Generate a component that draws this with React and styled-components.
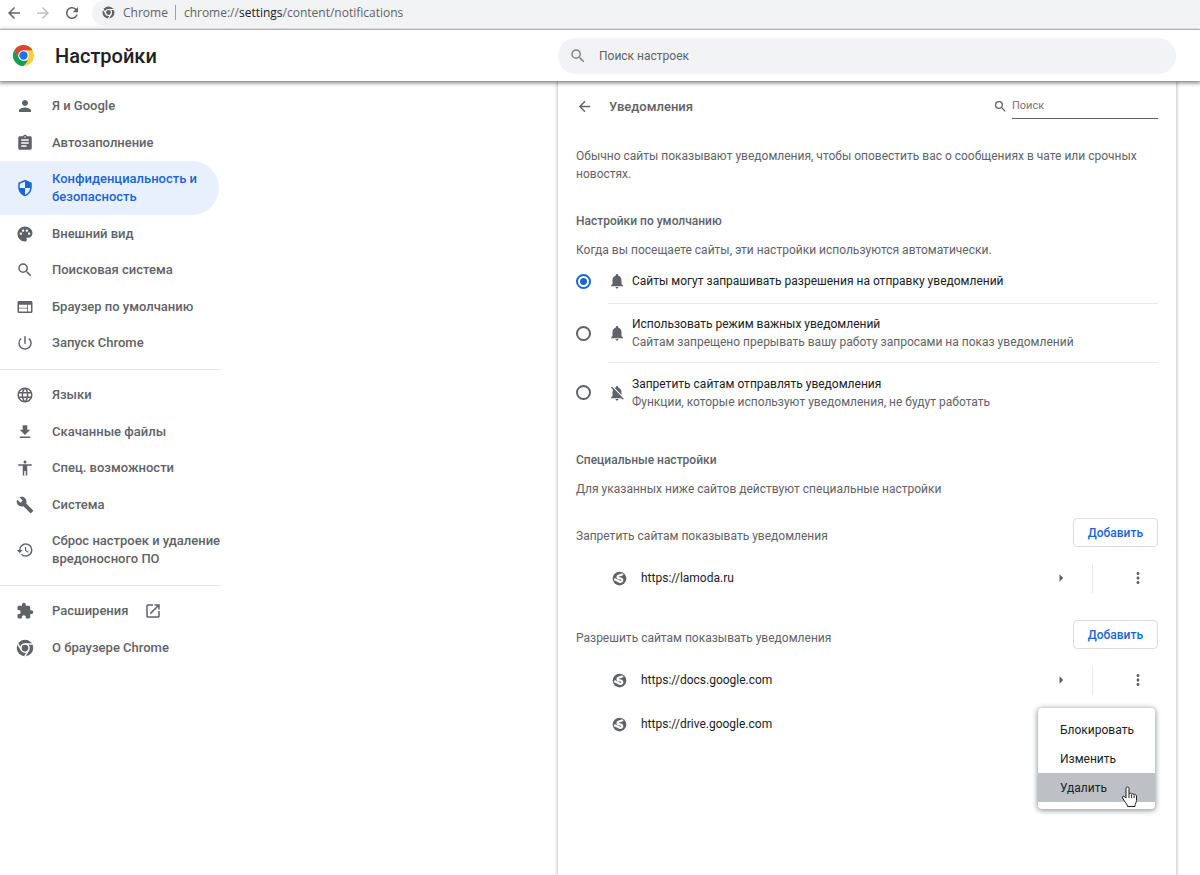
import { useState } from 'react';

import styled, { createGlobalStyle, css } from 'styled-components';
import {
  MdAccessibility,
  MdArrowBack,
  MdArrowForward,
  MdArrowRight,
  MdAssignment,
  MdBuild,
  MdExtension,
  MdFileDownload,
  MdHistory,
  MdLanguage,
  MdMoreVert,
  MdNotifications,
  MdNotificationsOff,
  MdOpenInNew,
  MdPalette,
  MdPerson,
  MdPowerSettingsNew,
  MdRefresh,
  MdSearch,
  MdSecurity,
  MdWeb,
} from 'react-icons/md';

const GlobalStyle = createGlobalStyle`
  * {
    box-sizing: border-box;
  }

  body {
    margin: 0;
    background: #fff;
    color: #5f6368;
    font-family: Roboto, sans-serif;
    font-size: 12px;
    line-height: 18px;
  }

  button,
  input {
    font: inherit;
  }
`;

const Page = styled.div`
  display: flex;
  flex-direction: column;
  height: 100vh;
  overflow: hidden;
`;

const BrowserBar = styled.div`
  display: flex;
  align-items: center;
  flex-shrink: 0;
  height: 30px;
  padding: 0 0 4px 5px;
  gap: 11px;
  border-bottom: 1px solid #dadce0;
`;

const IconButton = styled.button`
  display: flex;
  align-items: center;
  justify-content: center;
  flex-shrink: 0;
  padding: 0;
  border: 0;
  background: none;
  color: #5f6368;

  &:disabled {
    color: #bdc1c6;
  }
`;

const AddressBar = styled.div`
  display: flex;
  align-items: center;
  flex: 1;
  height: 26px;
  padding-left: 10px;
  border-radius: 13px 0 0 13px;
  background: #f1f3f4;
  font-family: 'Open Sans', sans-serif;
`;

const Origin = styled.span`
  margin-left: 8px;
  padding-right: 7px;
  border-right: 1px solid #9aa0a6;
  line-height: 15px;
`;

const Url = styled.span`
  margin-left: 8px;

  b {
    color: #202124;
    font-weight: 400;
  }
`;

const Toolbar = styled.header`
  display: flex;
  align-items: center;
  flex-shrink: 0;
  z-index: 1;
  height: 51px;
  padding: 0 24px 0 13px;
  background: #fff;
  box-shadow: 0 1px 4px 1px rgba(0, 0, 0, 0.5);
`;

const Title = styled.h1`
  flex: 1;
  margin: 0 0 0 21px;
  color: #202124;
  font-size: 20px;
  font-weight: 500;
  line-height: 24px;
`;

const SearchField = styled.label`
  display: flex;
  align-items: center;
  width: 51.5vw;
  height: 36px;
  padding-left: 11px;
  gap: 12px;
  border-radius: 18px;
  background: #f1f3f4;
  color: #80868b;

  input {
    flex: 1;
    min-width: 0;
    padding: 0;
    border: 0;
    outline: none;
    background: none;
    color: #202124;
  }

  input::placeholder {
    color: #5f6368;
    opacity: 1;
  }
`;

const Body = styled.div`
  display: flex;
  flex: 1;
  min-height: 0;
`;

const Sidebar = styled.nav`
  flex: 1;
  padding-top: 7px;
`;

const NavItem = styled.a`
  display: flex;
  align-items: center;
  width: 219px;
  min-height: 36px;
  padding-left: 16px;
  gap: 18px;
  border-radius: 0 27px 27px 0;
  color: #5f6368;
  font-size: 13px;
  font-weight: 500;
  text-decoration: none;

  &:nth-child(odd) {
    margin-bottom: 1px;
  }

  > svg {
    flex-shrink: 0;
  }

  ${(props) =>
    props.$tall &&
    css`
      min-height: 54px;
    `}

  ${(props) =>
    props.$active &&
    css`
      background: #e8f0fe;
      color: #1967d2;
    `}
`;

const NavLabel = styled.span`
  display: flex;
  align-items: center;
  gap: 16px;
  white-space: pre;
`;

const NavDivider = styled.hr`
  width: 221px;
  margin: 8px 0 7px;
  border: 0;
  border-top: 1px solid #e4e5e7;
`;

const Panel = styled.main`
  width: 51.5vw;
  margin-right: 24px;
  padding: 0 18px;
  box-shadow: 0 0 3px 1px rgba(60, 64, 67, 0.3);
`;

const PanelHeader = styled.div`
  display: flex;
  align-items: center;
  height: 51px;
`;

const Subtitle = styled.h2`
  flex: 1;
  margin: 0 0 0 16px;
  font-size: 13px;
  font-weight: 500;
`;

const PanelSearch = styled.label`
  display: flex;
  align-items: center;
  gap: 4px;

  input {
    width: 146px;
    height: 24px;
    padding: 0 0 2px;
    border: 0;
    border-bottom: 1px solid #5f6368;
    border-radius: 0;
    outline: none;
    background: none;
    font-size: 11px;
  }

  input::placeholder {
    color: #757575;
    opacity: 1;
  }
`;

const Text = styled.p`
  margin: 0;
`;

const Intro = styled(Text)`
  padding: 15px 0 29px;
`;

const Heading = styled.h3`
  margin: 0 0 11px;
  font-size: 12px;
  font-weight: 500;
  line-height: 18px;
`;

const Options = styled.div`
  display: flex;
  flex-direction: column;
  margin-bottom: 29px;
`;

const Option = styled.label`
  display: flex;
  align-items: center;
`;

const Radio = styled.input`
  appearance: none;
  flex-shrink: 0;
  width: 15px;
  height: 15px;
  margin: 0 17px 0 0;
  border: 2px solid #5f6368;
  border-radius: 50%;

  &:checked {
    border-color: #1967d2;
    background: radial-gradient(#1967d2 3px, #fff 4px);
  }
`;

const OptionBody = styled.span`
  display: flex;
  align-items: center;
  flex: 1;
  min-height: ${(props) => (props.$short ? 45 : 59)}px;
  gap: 6px;
  border-bottom: ${(props) => (props.$last ? 0 : '1px solid #e8eaed')};
`;

const OptionText = styled.span`
  display: flex;
  flex-direction: column;
`;

const Primary = styled.span`
  color: #202124;
`;

const ListHeader = styled.div`
  display: flex;
  align-items: flex-end;
  justify-content: space-between;
  margin-top: 20px;
`;

const ListTitle = styled.span`
  padding-bottom: 2px;
`;

const AddButton = styled.button`
  height: 29px;
  padding: 0 14px;
  border: 1px solid #dadce0;
  border-radius: 4px;
  background: #fff;
  color: #1967d2;
  font-weight: 500;
`;

const SiteRow = styled.div`
  display: flex;
  align-items: center;
  height: 44px;
  padding: 0 11px 0 36px;
`;

const SiteName = styled.span`
  flex: 1;
  margin-left: 14px;
  color: #202124;
`;

const RowDivider = styled.span`
  width: 1px;
  height: 29px;
  margin: 0 36px 0 22px;
  background: #e8eaed;
`;

const SiteList = styled.div`
  position: relative;
  padding-top: 9px;
`;

const Menu = styled.div`
  position: absolute;
  top: 59px;
  right: 3px;
  width: 117px;
  padding: 7px 0;
  border-radius: 4px;
  background: #fff;
  box-shadow: 0 1px 5px 1px rgba(60, 64, 67, 0.5);
`;

const MenuItem = styled.button`
  display: block;
  width: 100%;
  height: 29px;
  padding: 0 22px;
  border: 0;
  background: ${(props) => (props.$hover ? '#bdc1c6' : 'none')};
  color: #202124;
  text-align: left;
`;

const Pointer = styled.svg`
  position: absolute;
  right: 16px;
  bottom: 1px;
  pointer-events: none;
`;

const navGroups = [
  [
    { label: 'Я и Google', icon: MdPerson },
    { label: 'Автозаполнение', icon: MdAssignment },
    { label: 'Конфиденциальность и\nбезопасность', icon: MdSecurity, tall: true, active: true },
    { label: 'Внешний вид', icon: MdPalette },
    { label: 'Поисковая система', icon: MdSearch },
    { label: 'Браузер по умолчанию', icon: MdWeb },
    { label: 'Запуск Chrome', icon: MdPowerSettingsNew },
  ],
  [
    { label: 'Языки', icon: MdLanguage },
    { label: 'Скачанные файлы', icon: MdFileDownload },
    { label: 'Спец. возможности', icon: MdAccessibility },
    { label: 'Система', icon: MdBuild },
    { label: 'Сброс настроек и удаление\nвредоносного ПО', icon: MdHistory, tall: true },
  ],
  [
    { label: 'Расширения', icon: MdExtension, external: true },
    { label: 'О браузере Chrome', icon: ChromeMono },
  ],
];

const options = [
  {
    id: 'ask',
    icon: MdNotifications,
    title: 'Сайты могут запрашивать разрешения на отправку уведомлений',
  },
  {
    id: 'quiet',
    icon: MdNotifications,
    title: 'Использовать режим важных уведомлений',
    note: 'Сайтам запрещено прерывать вашу работу запросами на показ уведомлений',
  },
  {
    id: 'block',
    icon: MdNotificationsOff,
    title: 'Запретить сайтам отправлять уведомления',
    note: 'Функции, которые используют уведомления, не будут работать',
  },
];

function ChromeMono({ size }) {
  return (
    <svg width={size} height={size} viewBox="0 0 24 24" fill="none" aria-hidden="true">
      <circle cx="12" cy="12" r="11" fill="currentColor" />
      <circle cx="12" cy="12" r="5.5" stroke="#fff" strokeWidth="2" />
      <path d="M12 6.5h10M7.2 14.7l-5-8.6M16.8 14.7l-5 8.6" stroke="#fff" strokeWidth="2" />
    </svg>
  );
}

function ChromeLogo() {
  return (
    <svg width="21" height="21" viewBox="0 0 48 48" aria-hidden="true">
      <circle cx="24" cy="24" r="24" fill="#ffcd40" />
      <path d="M3.2 12 13.6 30 24 36h10.4L24 48A24 24 0 0 1 3.2 12z" fill="#0f9d58" />
      <path d="M3.2 12a24 24 0 0 1 41.6 0H24L13.6 30z" fill="#db4437" />
      <circle cx="24" cy="24" r="12" fill="#fff" />
      <circle cx="24" cy="24" r="9.5" fill="#1a73e8" />
    </svg>
  );
}

// Default favicon for sites without their own
function Globe() {
  return (
    <svg width="15" height="15" viewBox="0 0 24 24" fill="none" aria-hidden="true">
      <circle cx="12" cy="12" r="11" fill="#5f6368" />
      <path
        d="M17 4.500c-1 2-3.500 1.800-5 2.300C9 7.500 8 9.500 9.500 11c1 1 3 .6 4.500 1 2.500.7 3.200 3 1.500 4.800-2 2-4-.3-6-1.300L3.500 13"
        stroke="#fff"
        strokeWidth="3.5"
      />
    </svg>
  );
}

function NavGroup({ items }) {
  return (
    <div>
      {items.map(({ label, icon: Icon, tall, active, external }) => (
        <NavItem key={label} href="#" $tall={tall} $active={active}>
          <Icon size={18} />
          <NavLabel>
            {label}
            {external && <MdOpenInNew size={18} />}
          </NavLabel>
        </NavItem>
      ))}
    </div>
  );
}

function Site({ url, hideActions }) {
  return (
    <SiteRow>
      <Globe />
      <SiteName>{url}</SiteName>
      {!hideActions && (
        <>
          <IconButton aria-label={`Сведения: ${url}`}>
            <MdArrowRight size={18} />
          </IconButton>
          <RowDivider />
          <IconButton aria-label={`Ещё: ${url}`}>
            <MdMoreVert size={18} />
          </IconButton>
        </>
      )}
    </SiteRow>
  );
}

export default function App() {
  const [selected, setSelected] = useState('ask');

  return (
    <>
      <GlobalStyle />
      <Page>
        <BrowserBar>
          <IconButton aria-label="Назад">
            <MdArrowBack size={18} />
          </IconButton>
          <IconButton aria-label="Вперёд" disabled>
            <MdArrowForward size={18} />
          </IconButton>
          <IconButton aria-label="Обновить">
            <MdRefresh size={18} />
          </IconButton>
          <AddressBar>
            <ChromeMono size={13} />
            <Origin>Chrome</Origin>
            <Url>
              chrome://<b>settings</b>/content/notifications
            </Url>
          </AddressBar>
        </BrowserBar>
        <Toolbar>
          <ChromeLogo />
          <Title>Настройки</Title>
          <SearchField>
            <MdSearch size={18} />
            <input type="text" placeholder="Поиск настроек" aria-label="Поиск настроек" />
          </SearchField>
        </Toolbar>
        <Body>
          <Sidebar>
            <NavGroup items={navGroups[0]} />
            <NavDivider />
            <NavGroup items={navGroups[1]} />
            <NavDivider />
            <NavGroup items={navGroups[2]} />
          </Sidebar>
          <Panel>
            <PanelHeader>
              <IconButton aria-label="Назад к настройкам">
                <MdArrowBack size={17} />
              </IconButton>
              <Subtitle>Уведомления</Subtitle>
              <PanelSearch>
                <MdSearch size={15} />
                <input type="text" placeholder="Поиск" aria-label="Поиск" />
              </PanelSearch>
            </PanelHeader>
            <Intro>
              Обычно сайты показывают уведомления, чтобы оповестить вас о сообщениях в чате или
              срочных новостях.
            </Intro>
            <Heading>Настройки по умолчанию</Heading>
            <Text>Когда вы посещаете сайты, эти настройки используются автоматически.</Text>
            <Options>
              {options.map(({ id, icon: Icon, title, note }, index) => (
                <Option key={id}>
                  <Radio
                    type="radio"
                    name="notifications"
                    checked={selected === id}
                    onChange={() => setSelected(id)}
                  />
                  <OptionBody $short={!note} $last={index === options.length - 1}>
                    <Icon size={18} />
                    <OptionText>
                      <Primary>{title}</Primary>
                      {note && <span>{note}</span>}
                    </OptionText>
                  </OptionBody>
                </Option>
              ))}
            </Options>
            <Heading>Специальные настройки</Heading>
            <Text>Для указанных ниже сайтов действуют специальные настройки</Text>
            <ListHeader>
              <ListTitle>Запретить сайтам показывать уведомления</ListTitle>
              <AddButton>Добавить</AddButton>
            </ListHeader>
            <SiteList>
              <Site url="https://lamoda.ru" />
            </SiteList>
            <ListHeader>
              <ListTitle>Разрешить сайтам показывать уведомления</ListTitle>
              <AddButton>Добавить</AddButton>
            </ListHeader>
            <SiteList>
              <Site url="https://docs.google.com" />
              <Site url="https://drive.google.com" hideActions />
              <Menu role="menu">
                <MenuItem role="menuitem">Блокировать</MenuItem>
                <MenuItem role="menuitem">Изменить</MenuItem>
                <MenuItem role="menuitem" $hover>
                  Удалить
                </MenuItem>
                <Pointer width="18" height="22" viewBox="0 0 18 22" aria-hidden="true">
                  <path
                    d="M5 12V2.5a1.5 1.5 0 0 1 3 0V8c.3-1.2 2.5-1 2.6.4.6-1 2.4-.8 2.5.6.7-.8 2.4-.4 2.4 1v4.5c0 2-1.5 3-1.5 6H6.5c0-2-1.7-3.2-2.8-5.2L1.5 12c-.8-1.6 1.2-2.5 2.2-1.2z"
                    fill="#fff"
                    stroke="#202124"
                  />
                  <path d="M8 8v4M10.6 9v3M13.1 9.5V12" stroke="#202124" fill="none" />
                </Pointer>
              </Menu>
            </SiteList>
          </Panel>
        </Body>
      </Page>
    </>
  );
}
